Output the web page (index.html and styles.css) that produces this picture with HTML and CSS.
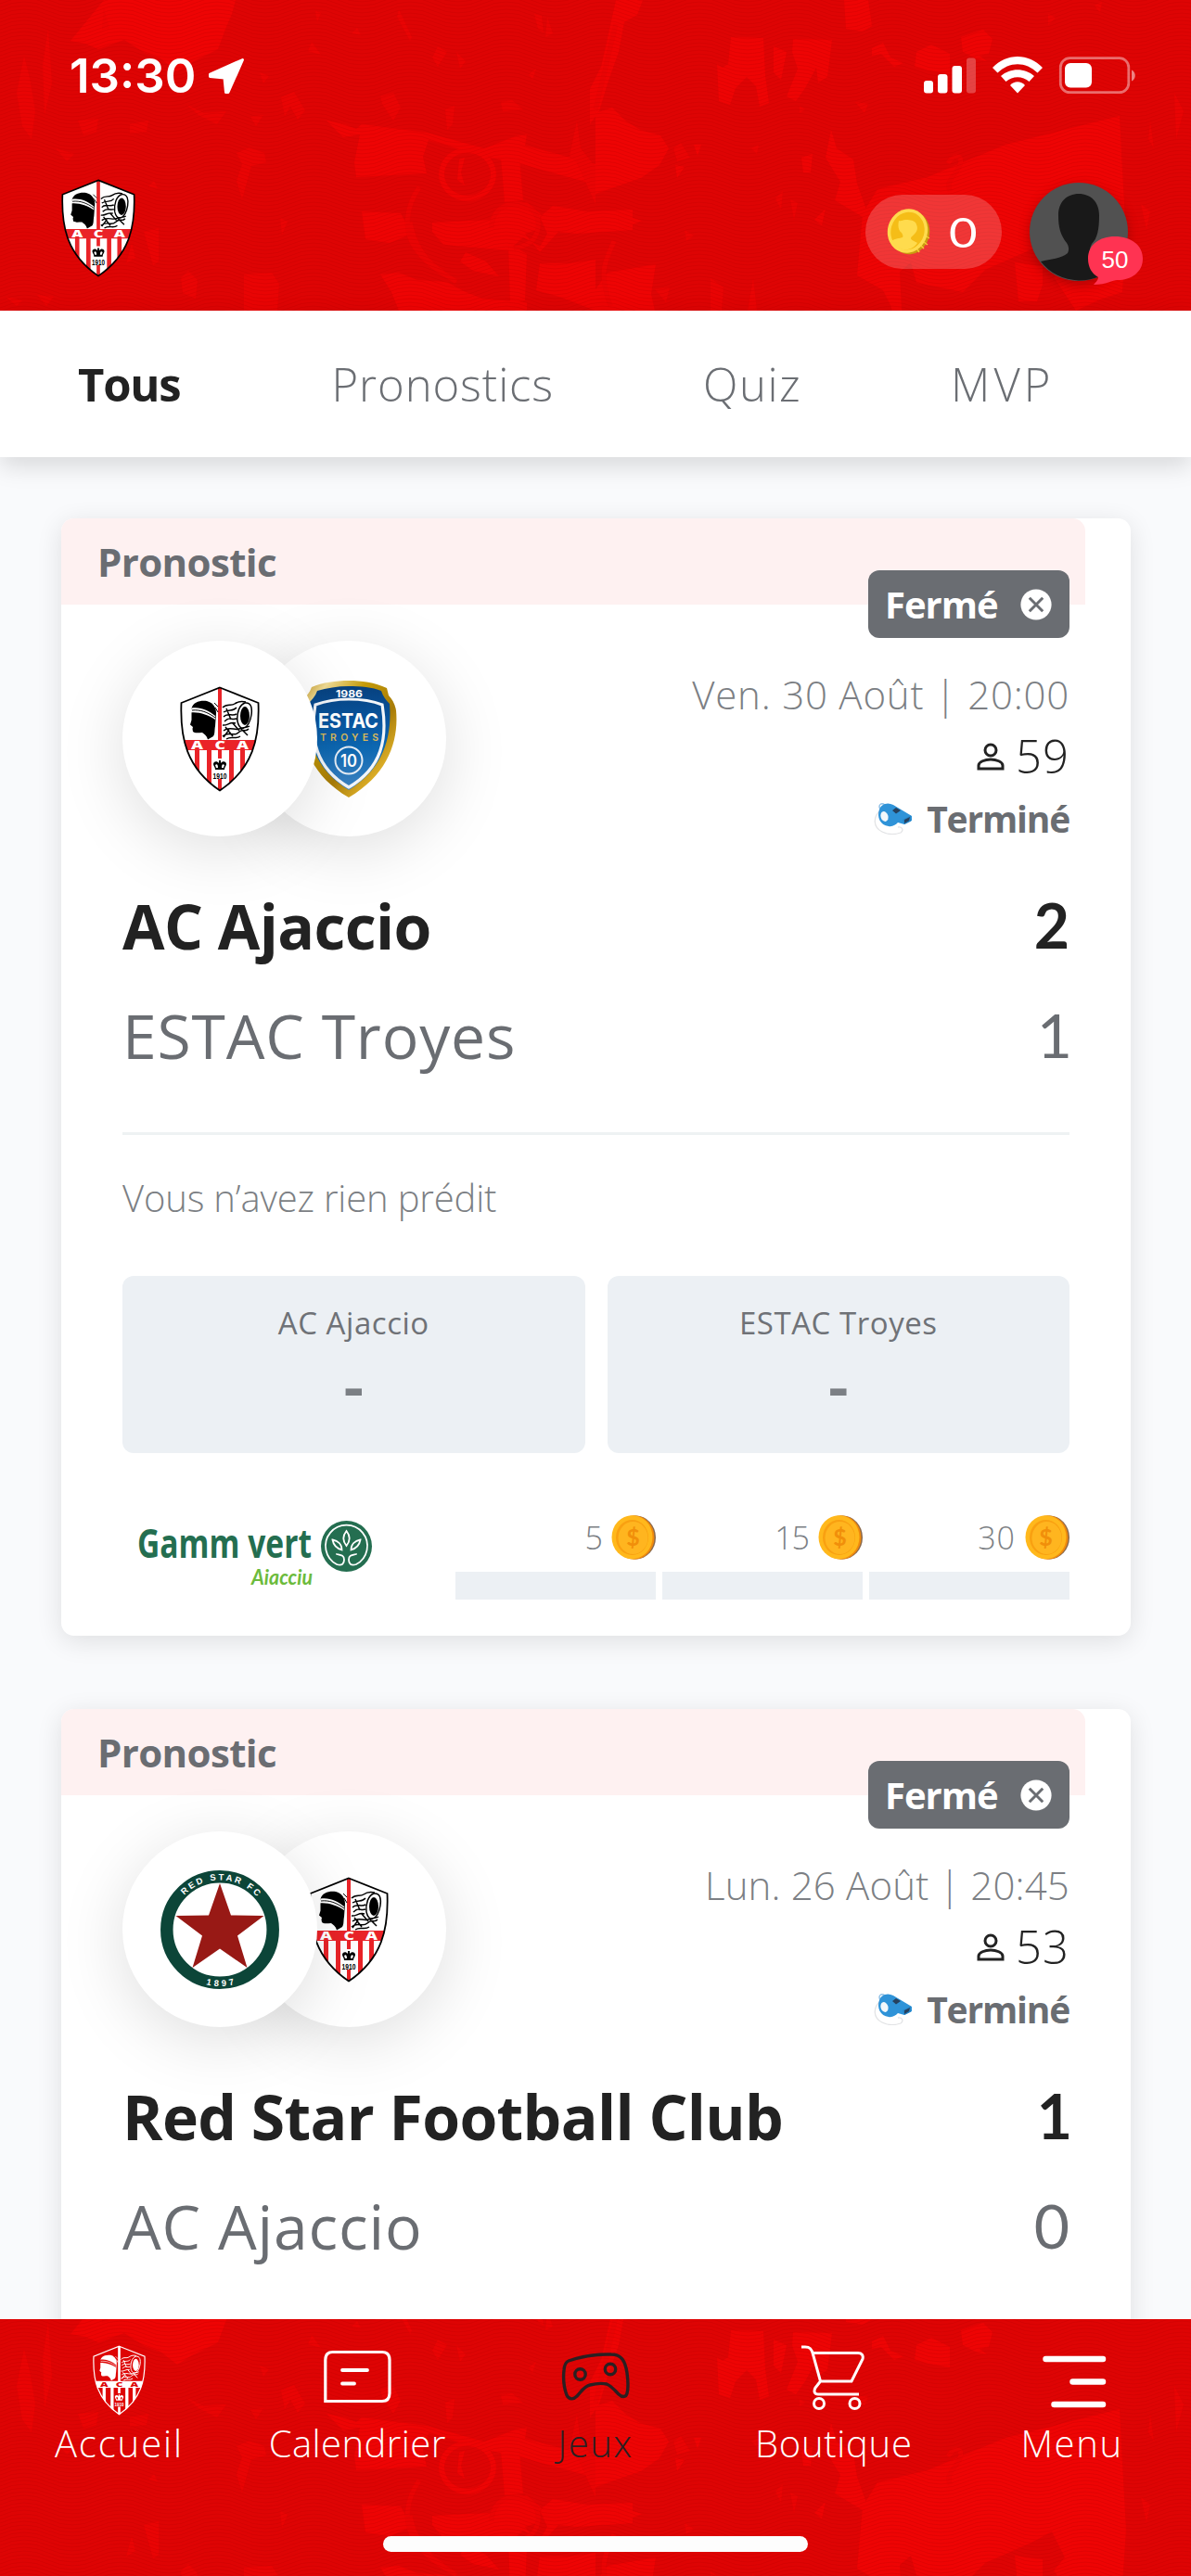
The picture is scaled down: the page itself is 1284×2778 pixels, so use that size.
FILE: index.html
```html
<!DOCTYPE html>
<html lang="fr">
<head>
<meta charset="utf-8">
<title>Jeux</title>
<link rel="stylesheet" href="styles.css">
</head>
<body>
<svg class="defs" width="0" height="0" aria-hidden="true">
  <defs>
    <pattern id="waves" width="104" height="12" patternUnits="userSpaceOnUse">
      <g fill="none" stroke="#b80000" stroke-opacity=".26" stroke-width="1">
        <path d="M0 -8q26 -12 52 0t52 0M0 -4q26 -12 52 0t52 0M0 0q26 -12 52 0t52 0M0 4q26 -12 52 0t52 0M0 8q26 -12 52 0t52 0M0 12q26 -12 52 0t52 0M0 16q26 -12 52 0t52 0M0 20q26 -12 52 0t52 0"/>
      </g>
    </pattern>
    <linearGradient id="gold" x1="0" x2="1" y1="0" y2="1">
      <stop offset="0" stop-color="#b8860b"/><stop offset=".15" stop-color="#f0dc96"/><stop offset=".35" stop-color="#c49a08"/><stop offset=".6" stop-color="#a87c08"/><stop offset=".8" stop-color="#dcae28"/><stop offset="1" stop-color="#8f6a05"/>
    </linearGradient>
    <linearGradient id="estac" x1="0" x2="0" y1="0" y2="1">
      <stop offset="0" stop-color="#07417f"/><stop offset=".35" stop-color="#0a56a0"/><stop offset=".6" stop-color="#0d68b2"/><stop offset="1" stop-color="#3f84c4"/>
    </linearGradient>
    <clipPath id="shieldClip"><path d="M43 1 84.500 18C86 56 79 88 43 113 7 88 0 56 1.500 18Z"/></clipPath>

    <symbol id="crest" viewBox="0 0 86 114">
      <path class="c-paper" d="M43 1.500 84.500 18C86 56 79 88 43 112.500 7 88 0 56 1.500 18Z"/>
      <g clip-path="url(#shieldClip)">
        <path class="c-red" d="M0 58h86v11H0zM16 69h5v45h-5zM29 69h5v45h-5zM53 69h5v45h-5zM65 69h5v45h-5zM41 0h4v59h-4zM41 69h4v9h-4zM41 100h4v14h-4z"/>
      </g>
      <path class="c-ink" d="M12.500 24C14 17 22 15 29 16c6 1.500 10 6 10 13l-1 14c-1 5 0 8-2 11l-6 3.500c-1-4-4-6-6-7.500-4 0-8 1-10-1l-.500-3 .500-2-3-2.500 1.500-5Z"/>
      <path class="c-paper" d="M12.500 23.500C22 22 31 26 38 32v4C30 31 21 27.500 11.500 28.500Z"/>
      <path class="c-line" d="M13 26c9-1 17 2 25 8M37 18l4 4M38 23l3 5" stroke-width="1"/>
      <ellipse class="c-ink" cx="70" cy="32" rx="5" ry="10"/>
      <path class="c-line" stroke-width="1.500" d="M62 38c-1-9 2-18 8-20 7-1 8 6 7 13-1 6-3 12-8 14-4 1-6-3-7-7M46 23c5-5 9-1 13-4s8-3 12-2M47 28c6-4 10 0 14-5M47 33c4-5 9 0 14-3M48 38c6-6 7-1 13-3M46 42c5 1 8-4 14-2M47 48c6-5 12 0 17-2s8-1 11-3M46 54c6-6 12 1 17-4s8 0 11-4M50 57c6-4 10 1 15-3M49 44l8 10M57 40l7 8M50 24l5 12M66 46l7 7M53 47l-6 8"/>
      <path class="c-ink" d="M36 84c0-3 4-4 6-1v-3h2v3c2-3 6-2 6 1 0 2-2 3-2 6H38c0-3-2-4-2-6Z"/>
      <path class="c-cut" d="M38 85c2-2 3 0 3 3h-2zM48 85c-2-2-3 0-3 3h2z"/>
      <text class="c-year" x="35.500" y="100" font-size="9" textLength="15" lengthAdjust="spacingAndGlyphs">1910</text>
      <g class="c-letters" font-size="11.500">
        <text x="12" y="67.500" textLength="13" lengthAdjust="spacingAndGlyphs">A</text>
        <text x="37.500" y="67.500" textLength="11.500" lengthAdjust="spacingAndGlyphs">C</text>
        <text x="61" y="67.500" textLength="13" lengthAdjust="spacingAndGlyphs">A</text>
      </g>
      <path class="c-line" stroke-width="1.800" d="M43 1.500 84.500 18C86 56 79 88 43 112.500 7 88 0 56 1.500 18Z"/>
    </symbol>

    <symbol id="troyes" viewBox="0 0 104 126">
      <path fill="url(#gold)" d="M52 0C38 0 24 2 12 7 10 13 6 17 1 22c-3 42 8 79 51 104 43-25 54-62 51-94-1-6-4-12-8-16l-2-8C80 2 66 0 52 0Z"/>
      <path fill="url(#estac)" d="M52 6C40 6 28 8 18 11 16 17 12 21 8 25c-3 38 8 71 44 93 36-22 47-55 44-93-4-4-7-8-9-14C78 7 64 6 52 6Z"/>
      <path fill="none" stroke="#f4f6fa" stroke-width="3.200" d="M52 20c-13 0-25 2-36 6C10 62 16 94 52 115 88 94 94 62 88 26 78 22 66 20 52 20Z"/>
      <text class="estac-year" x="38" y="17.500" textLength="29" lengthAdjust="spacingAndGlyphs">1986</text>
      <text class="estac-name" x="19" y="51" textLength="65" lengthAdjust="spacingAndGlyphs">ESTAC</text>
      <text class="estac-town" x="21" y="64.500" textLength="63">TROYES</text>
      <circle cx="52" cy="86" r="14.500" fill="none" stroke="#e6eef7" stroke-width="2"/>
      <text class="estac-num" x="43" y="92.500" textLength="18" lengthAdjust="spacingAndGlyphs">10</text>
    </symbol>

    <symbol id="redstar" viewBox="0 0 128 128">
      <circle cx="64" cy="64" r="57.200" fill="#fff" stroke="#0c4538" stroke-width="13.500"/>
      <path fill="#981915" d="M64 14 76 48.500 111.500 49 83 70.500 93.500 105 64 84.500 34.500 105 45 70.500 16.500 49 52 48.500Z"/>
      <path id="arcTop" fill="none" d="M10.500 64a53.500 53.500 0 0 1 107 0"/>
      <path id="arcBottom" fill="none" d="M3 64a61 61 0 0 0 122 0"/>
      <text class="rs-text" font-size="9.500"><textPath href="#arcTop" startOffset="41" textLength="88">RED STAR FC</textPath></text>
      <text class="rs-text" font-size="9.500"><textPath href="#arcBottom" startOffset="80.500" textLength="31">1897</textPath></text>
    </symbol>

    <symbol id="coin" viewBox="0 0 48 48">
      <ellipse cx="26.500" cy="24" rx="21.500" ry="23.500" fill="#8b6a4e"/>
      <ellipse cx="24.500" cy="24" rx="22" ry="23.700" fill="#f08a0c"/>
      <ellipse cx="22.500" cy="23.700" rx="22" ry="23.500" fill="#ffb81c"/>
      <ellipse cx="22.500" cy="24" rx="17.500" ry="19" fill="#f9a011"/>
      <ellipse cx="23.500" cy="24.500" rx="16" ry="17.500" fill="#ffb51f"/>
      <text class="coin-sign" x="23" y="33" text-anchor="middle">$</text>
    </symbol>

    <symbol id="whistle" viewBox="0 0 41 34">
      <path fill="none" stroke="#e2e3e5" stroke-width="1.300" d="M7 8C-1 15-1 26 9 31c6 3 14 3 20 1 4-3 1-7-3-6"/>
      <circle cx="9" cy="3.800" r="3" fill="none" stroke="#8fc0e6" stroke-width="1.400"/>
      <path fill="#2f93d8" d="M12 1c3-1 6-.500 9 1l20 12v5l-8 4-7-2c-2 2-6 5-10 4C7 24 3 15 6 7c1-3 3-5 6-6Z"/>
      <path fill="#2686c8" d="m31 18 9-4.500v6L33 23Z"/>
      <path fill="#26415f" d="m20 8 4-3 5 3-5 3.500ZM33 18l6-3-1 4-5 3Z"/>
      <ellipse cx="11.500" cy="14.500" rx="4" ry="5.500" fill="#f2f7fb" transform="rotate(-18 11.500 14.500)"/>
    </symbol>

    <symbol id="closed" viewBox="0 0 34 34">
      <circle cx="17" cy="17" r="16.600" fill="#fff"/>
      <path d="m9.800 9.800 14.400 14.400m0-14.400L9.800 24.200" stroke="#6a6d72" stroke-width="3"/>
    </symbol>

    <symbol id="person" viewBox="0 0 30 30">
      <g fill="none" stroke="#222" stroke-width="3"><circle cx="15" cy="8" r="6"/><path d="M2 28v-3.500c0-4 7-6.500 13-6.500s13 2.500 13 6.500V28Z"/></g>
    </symbol>

    <symbol id="fans" viewBox="0 0 1284 335">
      <g fill="#ee0404">
        <path d="m112 0-36 44 16 3 14 6 28-10 22 14 17 6 18 14 16-10 28-14 9-24 6-14 4-15Z"/>
        <path d="m352 130 20 4 12 5 6-5 70 9 62 17 34-13 12-2-2 12 76 20v22l-80-22-42-9-58-17-6 18 4 18-76 4-2-16 6-30-18 3Z"/>
        <path fill-rule="evenodd" d="M473 188a30 28 0 1 0 62 0 30 28 0 1 0-62 0m6 0a25 23 0 1 1 50 0 25 23 0 1 1-50 0m16-16 6-2-4 16 4 14-8-6Z"/>
        <path d="m390 228 42 2 12 22-24 10-26-4Zm76 12 62-3 16-14 24-5 16 14-6 16-12 4 16 20 20-22 20 2 60-4v-22l-50 2-36-6-14 12 8 18-8 14-18-10-16 14-70-6-12-14Z"/>
        <path d="m540 170 20 0 4 46-20 2ZM502 272l22 10 14 16-28-6-14-10ZM548 262l20 12-2 50-16 4Z"/>
        <path d="m410 296 20-2 20 8 32 2 18 10 20 8 48 4v9H430l-8-20ZM582 284l32 0 28-4v55l-36-14-28-8Z"/>
        <path d="M664 0h29l-6 16-14 8-6 32-12 34-9 30-10 14V96l12-24Z"/>
        <path d="m642 122 18-6 14 14 16 10 22 6 9 14-10 18-20 14-49 17Z"/>
        <path d="M642 312v23h64l-4-18 5-32-52 9ZM910 0h26l4 28-10 6-18-3Z"/>
        <path d="m788 40 35 1 2 40 4 30-10 4-4-22-10-10-12 12-6 18-12-4-2-40 6 4 6-4ZM855 42l42 1-5 40-10 6-2-16-12 22-10 14-10-5 12-30-6-18ZM834 50l14 6-6 30-8-8Z"/>
        <path d="m988 56 16-8 20 10 0 22-24-4-14-4ZM1036 40l24-8 10 10-4 16-10 2 8 6-10-2-16-8ZM940 52l12-6 8 16 14 6-10 4-14-14-10 2Z"/>
        <path d="m930 230 16-26 54-13 84-35 123-31 2 40 5 90-4 60-24 8-26 12-24-36 12-14-14-28-22 12-50 22-24 24-50-10-6-22-12 10 2 40 6 30-8 0-10-34-8-16-28-16Z"/>
        <path d="m896 140 6 20 18 12 4 26 10 28-4 8-30-18 6-20-16-26Zm-32 30 12-4-2 20-8 0ZM890 225l-4 18-8-6Z"/>
        <path d="m1094 283 30 4v20l-6 18h-20ZM666 230l26 8-24 10ZM728 178l10 2-8 12Zm20-22h8l-4 12Z"/>
      </g>
      <g fill="#e90404">
        <path d="M26 60l6 24 6 36-4 30-10-14-6-36ZM46 70l6-40 4 60-8 34ZM84 130l22-2-2 14-14 4ZM140 134l20-4-2 12-18 2ZM112 10l6 20-8 2ZM60 160l20 6-8 8Z"/>
        <path d="M255 165l14-6 16 6 2 10-16 4-10 36-6-20 6-18ZM303 105l14-6 12 20-8 10-8-14-6 10ZM200 112l20 10 24-2-10 14-20-10ZM280 78l10 4-6 8ZM270 126l14-2-8 12Z"/>
        <path d="M472 50l10 6-10 16-6-10ZM492 56l10 10-6 8ZM410 104l14-4 8 16-8 14-12-18ZM480 118l10-4-2 20-6 6ZM540 110l12-2 12 10-22 2ZM576 15l8 2 2 18-6-4ZM590 18l6 18-8 4ZM430 10l14 30-2 4-14-26ZM336 45l10 14-14-4Z"/>
        <path d="M622 130l4 30 16 20v40l-20-44-8-8ZM570 80l8-6-4 12ZM340 12l6 2-4 10ZM385 30l4 8-10-2Z"/>
        <path d="M263 296l30-2 8 12-2 29h-36ZM195 300l8-8 10 10-2 20-14-6ZM142 262l4 16-10 6ZM155 250l16-4v36l-6 4ZM258 200l6-4-2 14ZM302 235l8 4-6 14ZM6 320l18 4-6 6ZM40 318l18 2-8 10ZM166 195l4 8-10-2Z"/>
        <path d="M766 300l14 10-2 25h-12ZM812 300l4 35h-10ZM706 312l16-2-4 16ZM738 248l10 6-8 6ZM836 214l8-8-2 20ZM852 215l8 4-4 18ZM726 160l8-6 10 16-14 4ZM810 160l8-4-2 10ZM862 114l6 4-6 4ZM922 110l14 2-4 10ZM1130 15l8 4-8 8ZM1240 130l4 30-6-10ZM1230 220l10 8-4 20ZM1180 6l8-4-2 12ZM1266 100l10 20-8 30Z"/>
      </g>
      <g fill="none" stroke="#e90404" stroke-width="5">
        <path d="M452 202c-14 20-18 46-4 66s30 26 44 36M442 240c4 22 16 42 36 54M530 246c0-16 10-26 26-26s26 10 24 26-16 20-26 22M642 118l22-92M1022 176c8-12 18-8 12 4s-14 14-10 26M658 330c-14-40-4-50 4-70"/>
      </g>
    </symbol>
  </defs>
</svg>

<div class="screen">
  <header class="header">
    <svg class="texture" preserveAspectRatio="none"><use href="#fans" width="1284" height="335"/><rect width="100%" height="100%" fill="url(#waves)"/></svg>
    <div class="status">
      <div class="status-time">
        <span class="clock">13:30</span>
        <svg width="40" height="40" viewBox="0 0 40 40"><path fill="#fff" stroke="#fff" stroke-width="3" stroke-linejoin="round" d="M37.500 2.500 22 37.500H19.500L18 22 2.500 20.500V18Z"/></svg>
      </div>
      <svg width="232" height="42" viewBox="0 0 232 42">
        <g fill="#fff"><rect x="0" y="26" width="10" height="13.500" rx="3"/><rect x="15" y="19" width="10.500" height="20.500" rx="3"/><rect x="30.500" y="10" width="10.500" height="29.500" rx="3"/><rect x="46" y="1.500" width="10" height="38" rx="3" opacity=".25"/></g>
        <g transform="translate(74)"><path fill="#fff" d="M27 39.500 19 31c4-5 12-5 16 0ZM9 21c10-9 26-9 36 0l-5.500 6c-7-6.500-18-6.500-25 0ZM0 12C15-4 39-4 54 12l-5.500 5.500C36 5 18 5 5.500 17.500Z"/></g>
        <rect x="147.300" y="1.700" width="73.500" height="37" rx="10" fill="none" stroke="#fff" stroke-opacity=".42" stroke-width="2.800"/>
        <path d="M224 14.500c5 2 5 10 0 12Z" fill="#fff" opacity=".5"/>
        <rect x="152" y="7" width="29" height="26.500" rx="6" fill="#fff"/>
      </svg>
    </div>
    <div class="topbar">
      <svg class="crest" width="80" height="106"><use href="#crest"/></svg>
      <div class="account">
        <div class="coins">
          <svg width="50" height="50" viewBox="0 0 50 50">
            <ellipse cx="26.500" cy="26" rx="20.500" ry="23.500" transform="rotate(16 26.500 26)" fill="#c99a10"/>
            <path d="m41 36 4 3M38 40l3 3M34 44l2 3M44 30l3 2" stroke="#f6cb35" stroke-width="1.500"/>
            <ellipse cx="23.500" cy="24" rx="21.500" ry="24" transform="rotate(16 23.500 24)" fill="#ffdb4d"/>
            <ellipse cx="23.500" cy="24" rx="18" ry="20.500" transform="rotate(16 23.500 24)" fill="#f5bd17"/>
            <path fill="#ffdb4d" d="M6 35c4-3 9-3 12-4 1-2 0-3-1-5-4-3-4-8-3-13 3 1 4-1 7-1s8 0 11 3c2 4 3 7 0 11-2 3-5 4-5 6s4 3 7 5c-4 6-10 8-16 7-6-2-10-5-12-9Z"/>
          </svg>
          <span>0</span>
        </div>
        <div class="avatar">
          <svg width="106" height="106" viewBox="0 0 106 106">
            <circle cx="53" cy="53" r="53" fill="#515151"/>
            <path fill="#191919" d="M53 12c13 0 22 9 22 23 0 16-2 25-8 31-3 6-3 10 0 14 9 4 19 4 27 7a53 53 0 0 1-82-2c11-3 22-3 29-9 2-4 1-8-1-11-7-9-9-17-9-30 0-14 9-23 22-23Z"/>
          </svg>
          <span class="unread"><svg width="60" height="54" viewBox="0 0 60 54"><path fill="#ff3352" d="M30 1c17 0 30 9 30 24S47 48 33 48c-6 0-12 5-26 5 4-4 5-6 5-8C5 41 1 34 1 25 1 10 13 1 30 1Z"/></svg><b>50</b></span>
        </div>
      </div>
    </div>
  </header>

  <nav class="tabs">
    <span class="tab tab-on">Tous</span>
    <span class="tab">Pronostics</span>
    <span class="tab quiz">Quiz</span>
    <span class="tab mvp">MVP</span>
  </nav>

  <main class="feed">
    <article class="card">
      <div class="card-head">Pronostic</div>
      <div class="badge"><span>Fermé</span><svg width="34" height="34"><use href="#closed"/></svg></div>
      <div class="card-body">
        <div class="match">
          <div class="teams-logos">
            <div class="disc disc-front"><svg width="86" height="114"><use href="#crest"/></svg></div>
            <div class="disc disc-back"><svg width="104" height="126"><use href="#troyes"/></svg></div>
          </div>
          <div class="meta">
            <div class="date date-a">Ven. 30 Août | 20:00</div>
            <div class="players"><svg width="30" height="30"><use href="#person"/></svg><span>59</span></div>
            <div class="state"><svg width="41" height="34"><use href="#whistle"/></svg><span>Terminé</span></div>
          </div>
        </div>
        <div class="team team-win"><span>AC Ajaccio</span><span class="score">2</span></div>
        <div class="team"><span>ESTAC Troyes</span><span class="score score-one">1</span></div>
        <hr class="rule">
        <p class="note">Vous n’avez rien prédit</p>
        <div class="picks">
          <div class="pick"><span>AC Ajaccio</span><b>-</b></div>
          <div class="pick"><span>ESTAC Troyes</span><b>-</b></div>
        </div>
        <div class="rewards">
          <svg class="sponsor" width="280" height="91" viewBox="0 0 280 91">
            <text class="gv" x="16" y="46" textLength="188" lengthAdjust="spacingAndGlyphs">Gamm vert</text>
            <text class="gv-city" x="139" y="75" textLength="66" lengthAdjust="spacingAndGlyphs">Aiacciu</text>
            <circle cx="241.500" cy="33.500" r="27.500" fill="#246e50"/>
            <g fill="none" stroke="#fff" stroke-width="1.800" stroke-linecap="round">
              <path d="M231 53a22.500 22.500 0 1 1 21 0c-6 2-8-1-8-5 0-5 4-5 8-6M231 53c6 2 8-1 8-5 0-5-4-5-8-6"/>
              <path d="M241.500 17c-4 5-4 11 0 16 4-5 4-11 0-16Zm-15 9.500c1 6 4 9 10 11 0-6-4-10-10-11Zm30 0c-1 6-4 9-10 11 0-6 4-10 10-11Z"/>
            </g>
          </svg>
          <div class="steps">
            <div class="step"><div class="prize"><span>5</span><svg width="48" height="48"><use href="#coin"/></svg></div><i></i></div>
            <div class="step"><div class="prize"><span>15</span><svg width="48" height="48"><use href="#coin"/></svg></div><i></i></div>
            <div class="step"><div class="prize prize-last"><span>30</span><svg width="48" height="48"><use href="#coin"/></svg></div><i></i></div>
          </div>
        </div>
      </div>
    </article>

    <article class="card">
      <div class="card-head">Pronostic</div>
      <div class="badge"><span>Fermé</span><svg width="34" height="34"><use href="#closed"/></svg></div>
      <div class="card-body">
        <div class="match">
          <div class="teams-logos">
            <div class="disc disc-front"><svg width="128" height="128"><use href="#redstar"/></svg></div>
            <div class="disc disc-back"><svg width="86" height="114"><use href="#crest"/></svg></div>
          </div>
          <div class="meta">
            <div class="date date-b">Lun. 26 Août | 20:45</div>
            <div class="players"><svg width="30" height="30"><use href="#person"/></svg><span>53</span></div>
            <div class="state"><svg width="41" height="34"><use href="#whistle"/></svg><span>Terminé</span></div>
          </div>
        </div>
        <div class="team team-win"><span>Red Star Football Club</span><span class="score score-one">1</span></div>
        <div class="team"><span>AC Ajaccio</span><span class="score">0</span></div>
        <hr class="rule">
      </div>
    </article>
  </main>

  <nav class="dock">
    <svg class="texture" preserveAspectRatio="none"><use href="#fans" y="-28" width="1284" height="335"/><rect width="100%" height="100%" fill="url(#waves)"/></svg>
    <div class="dock-items">
      <div class="item"><svg class="crest crest-mono" width="57" height="76"><use href="#crest"/></svg><span class="l-acc">Accueil</span></div>
      <div class="item"><svg width="73" height="76" viewBox="0 0 73 76"><g fill="none" stroke="#fff" stroke-width="3.200"><path d="M1.800 60.500V16c0-6 3-8.500 8-8.500H63c5 0 8 3 8 8.500v36c0 6-3 8.500-8 8.500H2Z"/><path d="M20 27h27M20 41.500h13" stroke-linecap="round" stroke-width="3.800"/></g></svg><span class="l-cal">Calendrier</span></div>
      <div class="item item-on"><svg width="74" height="76" viewBox="0 0 74 76"><g fill="none" stroke="#2a2022" stroke-width="3.400"><path d="M8 17C22 12 38 9.500 54 10c11 0 15 7 17 20 1 8 2 15 0 22-1 5-6 4-9 1-4-4-8-9-13-11-5-1-14 0-18 1-6 1-10 8-14 12-3 3-8 5-11-1C3 46 2 36 3 27c.500-6 2-9 5-10Z"/><circle cx="20.500" cy="31.500" r="5.700"/><circle cx="53" cy="26" r="5.700"/></g></svg><span class="l-jeux">Jeux</span></div>
      <div class="item"><svg width="71" height="76" viewBox="0 0 71 76"><g fill="none" stroke="#fff" stroke-width="3"><path d="M1 2h4c5 0 7 2 8.500 8l8 29h33.500L67 15c1-4-1-6.500-5-6.500H13M21.500 39l-5.500 7c-2 4-1 7 3 7h44"/><circle cx="20" cy="63" r="5.500"/><circle cx="58.500" cy="63" r="5.500"/></g></svg><span class="l-bou">Boutique</span></div>
      <div class="item"><svg width="74" height="76" viewBox="0 0 74 76"><path d="M8.500 15h61.500M37.500 39.500h32.500M17.500 64h52.500" stroke="#fff" stroke-width="6.500" stroke-linecap="round"/></svg><span class="l-menu">Menu</span></div>
    </div>
    <div class="home"></div>
  </nav>
</div>
</body>
</html>
```
FILE: styles.css
```css
* { box-sizing: border-box; }
body { margin: 0; background: #f9fafc; font-family: "Open Sans", "Lato", sans-serif; font-weight: 300; }
svg { display: block; flex: none; }
p, hr { margin: 0; }
.defs { position: absolute; }

.screen { width: 1284px; height: 2778px; display: flex; flex-direction: column; overflow: hidden; }

/* Club colours used by the crest symbol */
.c-paper { fill: var(--paper, #fff); }
.c-red { fill: var(--band, #ea2328); }
.c-ink { fill: var(--ink, #000); }
.c-line { fill: none; stroke: var(--ink, #000); }
.c-cut { fill: var(--paper, #fff); }
.c-year { font-family: "Liberation Sans", sans-serif; font-weight: 700; fill: var(--ink, #000); }
.c-letters { font-family: "Open Sans", sans-serif; font-weight: 800; fill: var(--paper, #fff); }
.crest-mono { --paper: #de0404; --band: #fff; --ink: #fff; }

.estac-year { font: 700 11px "Inter", sans-serif; fill: #fff; }
.estac-name { font: 700 22px "Inter", sans-serif; fill: #fff; }
.estac-town { font: 600 10.500px "Inter", sans-serif; fill: #d8b95c; }
.estac-num { font: 600 18px "Inter", sans-serif; fill: #fff; }
.rs-text { font-family: "Liberation Sans", sans-serif; font-weight: 700; fill: #fff; }
.coin-sign { font: 700 25px "Lato", sans-serif; fill: #f18f0a; }

/* Header */
.header { position: relative; height: 335px; background: #de0404; color: #fff; flex: none; }
.texture { position: absolute; inset: 0; width: 100%; height: 100%; }
.status { position: relative; height: 164px; padding: 61px 56px 0 75px; display: flex; justify-content: space-between; align-items: flex-start; }
.status-time { display: flex; align-items: center; gap: 13px; height: 42px; }
.clock { font: 600 51px/42px "Inter", sans-serif; }
.topbar { position: relative; display: flex; justify-content: space-between; align-items: flex-start; padding: 29px 52px 0 66px; }
.account { display: flex; align-items: center; gap: 30px; padding-top: 4px; }
.coins { display: flex; align-items: center; gap: 18px; width: 147px; height: 80px; padding-left: 22px; border-radius: 40px; background: rgba(255, 255, 255, .2); font: 400 44px/80px "Lato", sans-serif; }
.coins span { transform: scaleX(1.2); transform-origin: left; }
.avatar { position: relative; width: 122px; height: 106px; }
.avatar > svg { filter: drop-shadow(0 4px 6px rgba(60, 0, 0, .35)); }
.unread { position: absolute; left: 62px; top: 57px; }
.unread b { position: absolute; inset: 0; text-align: center; font: 400 26px/52px "Liberation Sans", sans-serif; }

/* Category tabs */
.tabs { position: relative; z-index: 1; flex: none; display: flex; gap: 161px; height: 158px; padding-left: 84px; background: #fff; box-shadow: 0 10px 24px rgba(0, 0, 0, .13); }
.tab { font-size: 49px; line-height: 158px; letter-spacing: .900px; color: #6b6e73; white-space: nowrap; }
.tab-on { font-weight: 700; color: #222; letter-spacing: -1.200px; margin-right: 2px; }
.quiz { letter-spacing: 1.500px; }
.mvp { letter-spacing: 4px; }

/* Prediction cards */
.feed { flex: 1; min-height: 0; overflow: hidden; padding: 66px 65px 0 66px; display: flex; flex-direction: column; gap: 79px; }
.card { position: relative; flex: none; min-height: 1205px; border-radius: 14px; background: #fff; box-shadow: 0 6px 28px rgba(0, 0, 0, .11); }
.card-head { width: 1104px; height: 93px; padding-left: 39px; border-radius: 14px 14px 0 0; background: #fef1f1; font-weight: 700; font-size: 42px; line-height: 93px; letter-spacing: -.620px; color: #6a6d72; }
.badge { position: absolute; right: 66px; top: 56px; width: 217px; height: 73px; padding: 0 19px 0 18px; display: flex; align-items: center; justify-content: space-between; border-radius: 12px; background: #6a6d72; color: #fff; font-weight: 700; font-size: 40px; line-height: 72px; letter-spacing: -1px; z-index: 1; }
.card-body { padding: 39px 66px 39px; }
.match { display: flex; justify-content: space-between; height: 248px; }
.teams-logos { display: flex; height: 211px; }
.disc { width: 210px; height: 211px; flex: none; border-radius: 50%; background: #fff; display: flex; align-items: center; justify-content: center; box-shadow: 0 14px 70px rgba(0, 0, 0, .13); }
.disc-front { position: relative; z-index: 1; }
.disc-back { margin-left: -71px; }
.meta { display: flex; flex-direction: column; align-items: flex-end; padding-top: 25px; position: relative; }
.date { height: 66px; font-size: 42px; line-height: 66px; color: #7c7f84; letter-spacing: .790px; }
.date-b { letter-spacing: .150px; }
.players { display: flex; align-items: center; gap: 12px; height: 67px; font-size: 49px; line-height: 67px; letter-spacing: 1px; color: #222; }
.state { display: flex; align-items: center; gap: 16px; height: 67px; font-size: 39px; font-weight: 700; line-height: 67px; letter-spacing: -1.200px; color: #6a6d72; }
.team { position: relative; display: flex; justify-content: space-between; height: 118px; font-size: 66px; font-weight: 400; line-height: 118px; letter-spacing: .830px; color: #6a6d72; white-space: nowrap; }
.team-win { font-weight: 700; letter-spacing: -.650px; color: #222; }
.score { font-family: "Lato", sans-serif; letter-spacing: 0; }
.score-one { margin-right: -3px; }
.rule { height: 3px; margin-top: 46px; border: 0; background: #eef2f3; }
.note { margin: 38px 0 54px; font-size: 40px; line-height: 60px; letter-spacing: -.170px; color: #7c7f84; }
.picks { display: grid; grid-template-columns: 1fr 1fr; gap: 24px; }
.pick { height: 191px; border-radius: 12px; background: #ecf0f4; display: flex; flex-direction: column; align-items: center; color: #6f7277; }
.pick span { font-size: 33px; font-weight: 400; line-height: 60px; margin-top: 21px; letter-spacing: .550px; }
.pick b { font: 900 66px/70px "Lato", sans-serif; margin-top: 4px; color: #7b7f84; }
.rewards { display: flex; justify-content: space-between; margin-top: 67px; }
.gv { font: 700 43px "Open Sans", sans-serif; fill: #246e50; }
.gv-city { font: italic 700 22px "Lato", sans-serif; fill: #6cbb3c; }
.steps { display: grid; grid-template-columns: repeat(3, 1fr); gap: 7px; width: 662px; }
.prize { display: flex; justify-content: flex-end; align-items: center; gap: 10px; height: 48px; font-size: 34px; line-height: 48px; letter-spacing: -1px; color: #7c7f84; }
.prize-last { letter-spacing: 1px; }
.step i { display: block; height: 30px; margin-top: 13px; background: #ecf0f4; }

/* Bottom navigation */
.dock { position: relative; z-index: 1; flex: none; height: 277px; background: #de0404; color: #fff; display: flex; flex-direction: column; align-items: center; justify-content: space-between; padding: 28px 0 26px; overflow: hidden; }
.dock-items { position: relative; display: grid; grid-template-columns: repeat(5, 1fr); width: 1284px; }
.item { display: flex; flex-direction: column; align-items: center; font-size: 40px; line-height: 60px; }
.item-on { color: #2a2022; }
.l-acc { letter-spacing: 1.890px; }
.l-cal { letter-spacing: .440px; }
.l-jeux { letter-spacing: 1.500px; }
.l-bou { letter-spacing: .720px; }
.l-menu { letter-spacing: 1.630px; }
.home { position: relative; width: 458px; height: 17px; border-radius: 9px; background: #fdfdfd; }
```
